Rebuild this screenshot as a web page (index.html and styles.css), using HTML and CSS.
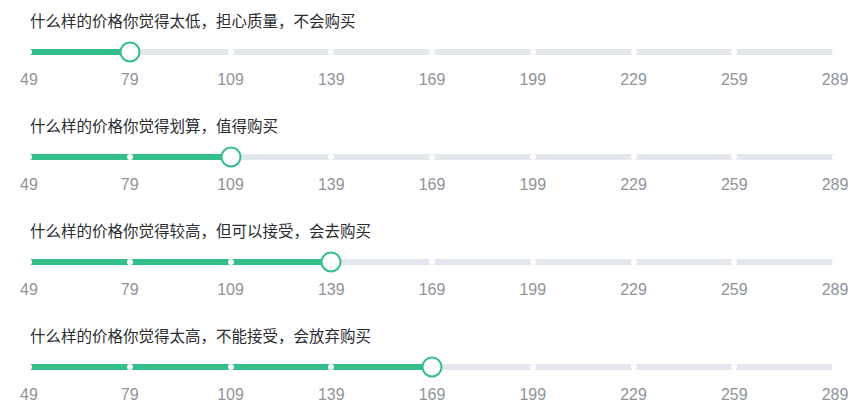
FILE: index.html
```html
<!DOCTYPE html>
<html lang="zh-CN">
<head>
  <meta charset="UTF-8">
  <meta name="viewport" content="width=device-width, initial-scale=1.0">
  <title>价格敏感度测试</title>
  <link rel="stylesheet" href="styles.css">
</head>
<body>
  <div class="survey">

    <div class="question">
      <p class="q-title">什么样的价格你觉得太低，担心质量，不会购买</p>
      <div class="slider">
        <div class="runway">
          <div class="bar" style="width: 12.5%"></div>
          <div class="stops"><span></span><span></span><span></span><span></span><span></span><span></span><span></span><span></span><span></span></div>
          <div class="handle" style="left: 12.5%"></div>
        </div>
        <div class="marks">
          <span>49</span><span>79</span><span>109</span><span>139</span><span>169</span><span>199</span><span>229</span><span>259</span><span>289</span>
        </div>
      </div>
    </div>

    <div class="question">
      <p class="q-title">什么样的价格你觉得划算，值得购买</p>
      <div class="slider">
        <div class="runway">
          <div class="bar" style="width: 25%"></div>
          <div class="stops"><span></span><span></span><span></span><span></span><span></span><span></span><span></span><span></span><span></span></div>
          <div class="handle" style="left: 25%"></div>
        </div>
        <div class="marks">
          <span>49</span><span>79</span><span>109</span><span>139</span><span>169</span><span>199</span><span>229</span><span>259</span><span>289</span>
        </div>
      </div>
    </div>

    <div class="question">
      <p class="q-title">什么样的价格你觉得较高，但可以接受，会去购买</p>
      <div class="slider">
        <div class="runway">
          <div class="bar" style="width: 37.5%"></div>
          <div class="stops"><span></span><span></span><span></span><span></span><span></span><span></span><span></span><span></span><span></span></div>
          <div class="handle" style="left: 37.5%"></div>
        </div>
        <div class="marks">
          <span>49</span><span>79</span><span>109</span><span>139</span><span>169</span><span>199</span><span>229</span><span>259</span><span>289</span>
        </div>
      </div>
    </div>

    <div class="question">
      <p class="q-title">什么样的价格你觉得太高，不能接受，会放弃购买</p>
      <div class="slider">
        <div class="runway">
          <div class="bar" style="width: 50%"></div>
          <div class="stops"><span></span><span></span><span></span><span></span><span></span><span></span><span></span><span></span><span></span></div>
          <div class="handle" style="left: 50%"></div>
        </div>
        <div class="marks">
          <span>49</span><span>79</span><span>109</span><span>139</span><span>169</span><span>199</span><span>229</span><span>259</span><span>289</span>
        </div>
      </div>
    </div>

  </div>
</body>
</html>
```

FILE: styles.css
```css
body {
  margin: 0;
  background: #fff;
  font-family: "Noto Sans CJK SC", "Noto Sans", sans-serif;
}
.survey {
  padding-left: 29px;
  width: 806px;
}
.question {
  height: 105px;
}
.q-title {
  margin: 0;
  padding-top: 10px;
  padding-left: 1px;
  font-size: 15.5px;
  line-height: 21px;
  color: #2b2d31;
}
.slider {
  margin-top: 18px;
}
.runway {
  position: relative;
  height: 6px;
  border-radius: 3px;
  background-color: #e4e7ed;
}
.bar {
  height: 100%;
  border-radius: 3px 0 0 3px;
  background-color: #33be8a;
}
.stops {
  position: absolute;
  top: 0;
  left: 0;
  right: 0;
  height: 6px;
  display: flex;
  justify-content: space-between;
}
.stops span {
  width: 0;
  display: flex;
  justify-content: center;
}
.stops span::before {
  content: "";
  flex: none;
  width: 6px;
  height: 6px;
  border-radius: 50%;
  background-color: #fff;
}
.handle {
  position: absolute;
  top: 3px;
  width: 21px;
  height: 21px;
  box-sizing: border-box;
  border: 2px solid #33be8a;
  border-radius: 50%;
  background-color: #fff;
  transform: translate(-50%, -50%);
}
.marks {
  display: flex;
  justify-content: space-between;
  margin-top: 15px;
  font-family: "Liberation Sans", Arial, sans-serif;
  font-size: 16px;
  line-height: 20px;
  color: #909399;
}
.marks span {
  width: 0;
  display: flex;
  justify-content: center;
  white-space: nowrap;
}
```
